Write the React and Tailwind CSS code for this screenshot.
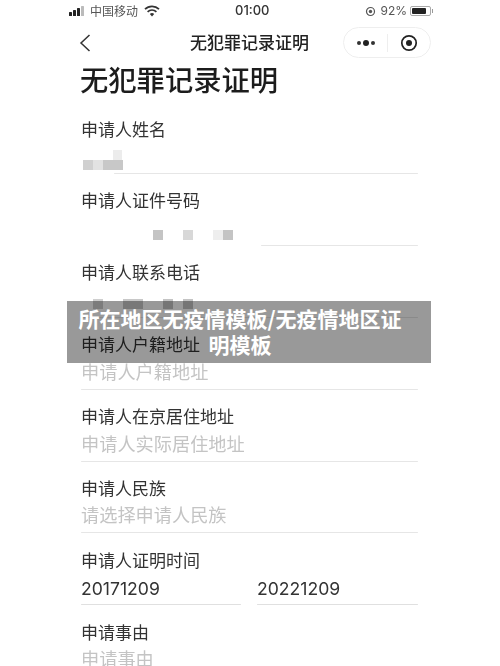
const cjk = "font-['Noto_Sans_CJK_SC','Noto_Sans',sans-serif]";

function StatusBar() {
  return (
    <div className="flex h-[21px] items-center pl-[69px] pr-[67px] pt-[1px] text-[12px] text-[#333]">
      <div className="flex w-[125px] items-center">
        <svg width="16" height="10" viewBox="0 0 16 10" className="mr-[5px]">
          <rect x="0" y="6" width="3" height="4" rx="0.6" fill="#222" />
          <rect x="4" y="4" width="3" height="6" rx="0.6" fill="#222" />
          <rect x="8" y="2" width="3" height="8" rx="0.6" fill="#222" />
          <rect x="12" y="0" width="3" height="10" rx="0.6" fill="#bbb" />
        </svg>
        <span className="text-[12px] leading-none text-[#555]">中国移动</span>
        <svg width="16" height="12" viewBox="0 0 16 12" className="ml-[6px]">
          <path d="M1 4.2a10 10 0 0 1 14 0" fill="none" stroke="#333" strokeWidth="1.7" />
          <path d="M3.6 6.8a6.3 6.3 0 0 1 8.8 0" fill="none" stroke="#333" strokeWidth="1.7" />
          <path d="M8 11.5 5.8 9a3.2 3.2 0 0 1 4.4 0Z" fill="#333" />
        </svg>
      </div>
      <span className="ml-[41px] font-['Inter',sans-serif] text-[13px] font-medium text-[#333]">01:00</span>
      <div className="ml-auto flex items-center">
        <svg width="11" height="11" viewBox="0 0 11 11" className="mr-[4px]">
          <circle cx="5.5" cy="5.5" r="4" fill="none" stroke="#555" strokeWidth="1.2" />
          <circle cx="5.5" cy="5.5" r="1.7" fill="#555" />
        </svg>
        <span className="font-['Inter',sans-serif] text-[12px] leading-none text-[#555]">92%</span>
        <div className="ml-[3px] flex h-[10px] w-[21px] items-center rounded-[2px] border border-[#aaa] p-[1px]">
          <div className="h-full w-[85%] rounded-[1px] bg-[#222]" />
        </div>
        <div className="ml-[1px] h-[4px] w-[1px] bg-[#999]" />
      </div>
    </div>
  );
}

function NavBar() {
  return (
    <div className="relative flex h-[43px] items-center pl-[78px] pr-[69px]">
      <svg width="14" height="20" viewBox="0 0 14 20">
        <path d="M11.5 2 3 10l8.5 8" fill="none" stroke="#333" strokeWidth="1.5" />
      </svg>
      <span className="mb-[3px] ml-[98px] text-[17px] font-medium leading-none text-[#222]">无犯罪记录证明</span>
      <div className="ml-auto flex h-[31px] w-[88px] items-center rounded-full border border-[#eee]">
        <div className="flex w-[43px] items-center justify-center gap-[2px]">
          <span className="h-[4px] w-[4px] rounded-full bg-[#333]" />
          <span className="h-[6px] w-[6px] rounded-full bg-[#222]" />
          <span className="h-[4px] w-[4px] rounded-full bg-[#333]" />
        </div>
        <div className="h-[18px] w-px bg-[#eee]" />
        <div className="flex flex-1 items-center justify-center">
          <svg width="18" height="18" viewBox="0 0 18 18">
            <circle cx="9" cy="9" r="7.2" fill="none" stroke="#222" strokeWidth="1.7" />
            <circle cx="9" cy="9" r="3" fill="#222" />
          </svg>
        </div>
      </div>
    </div>
  );
}

function Field({ label, children, lineFrom = "ml-0" }) {
  return (
    <div className="flex h-[71.9px] flex-col">
      <div className="flex h-[24px] items-center text-[17px] leading-none text-[#333]">{label}</div>
      <div className="h-[33px] pt-[3px] text-[18.2px] leading-[24px] text-[#c4c4c4]">{children}</div>
      <div className={`h-px rounded-full bg-[#e6e6e6] ${lineFrom}`} />
    </div>
  );
}

function Blot({ className }) {
  return <span className={`absolute bg-[#c4c4c4] ${className}`} />;
}

export default function App() {
  return (
    <div className={`relative h-[666px] w-[500px] overflow-hidden bg-white ${cjk}`}>
      <div className="blur-[0.35px]">
        <StatusBar />
        <NavBar />
        <h1 className="ml-[80px] mt-[-2px] flex h-[35px] items-center text-[28.3px] font-medium leading-none text-[#1c1c1c]">无犯罪记录证明</h1>
        <div className="ml-[81px] mr-[82px] mt-[19px]">
          <Field label="申请人姓名" lineFrom="ml-[33px]">
            <div className="relative h-[24px]">
              <Blot className="left-[2px] top-[17px] h-[10px] w-[10px] bg-[#d0d0d0]" />
              <Blot className="left-[12px] top-[17px] h-[10px] w-[10px] bg-[#e2e2e2]" />
              <Blot className="left-[22px] top-[17px] h-[10px] w-[20px] bg-[#c8c8c8]" />
              <Blot className="left-[32px] top-[7px] h-[10px] w-[9px] bg-[#ececec]" />
            </div>
          </Field>
          <Field label="申请人证件号码" lineFrom="ml-[180px]">
            <div className="relative h-[24px]">
              <Blot className="left-[72px] top-[15px] h-[10px] w-[10px]" />
              <Blot className="left-[102px] top-[15px] h-[10px] w-[10px] bg-[#d8d8d8]" />
              <Blot className="left-[132px] top-[15px] h-[10px] w-[10px] bg-[#eeeeee]" />
              <Blot className="left-[142px] top-[15px] h-[10px] w-[10px]" />
            </div>
          </Field>
          <Field label="申请人联系电话">
            <div className="relative h-[24px]">
              <Blot className="left-[12px] top-[12px] h-[10px] w-[10px] bg-[#cfcfcf]" />
              <Blot className="left-[42px] top-[12px] h-[10px] w-[20px] bg-[#c8c8c8]" />
              <Blot className="left-[82px] top-[12px] h-[10px] w-[10px]" />
              <Blot className="left-[102px] top-[12px] h-[10px] w-[10px]" />
            </div>
          </Field>
          <Field label="申请人户籍地址">申请人户籍地址</Field>
          <Field label="申请人在京居住地址">申请人实际居住地址</Field>
          <Field label="申请人民族">请选择申请人民族</Field>
          <div className="flex h-[71.9px] flex-col">
            <div className="flex h-[24px] items-center text-[17px] leading-none text-[#333]">申请人证明时间</div>
            <div className="flex h-[33px] gap-[16px] pt-[6px] font-['Inter','Noto_Sans',sans-serif] text-[17.6px] leading-[24px] text-[#333]">
              <span className="w-[160px]">20171209</span>
              <span className="flex-1">20221209</span>
            </div>
            <div className="flex gap-[16px]">
              <div className="h-px w-[160px] rounded-full bg-[#e0e0e0]" />
              <div className="h-px flex-1 rounded-full bg-[#e0e0e0]" />
            </div>
          </div>
          <Field label="申请事由">申请事由</Field>
        </div>
      </div>
      <div className="absolute left-[67px] top-[301px] flex h-[62px] w-[364px] flex-col items-center bg-black/40 pr-[18px] pt-[4px] text-[21px] font-bold leading-[26px] text-white">
        <span className="whitespace-nowrap">所在地区无疫情模板/无疫情地区证</span>
        <span>明模板</span>
      </div>
    </div>
  );
}
